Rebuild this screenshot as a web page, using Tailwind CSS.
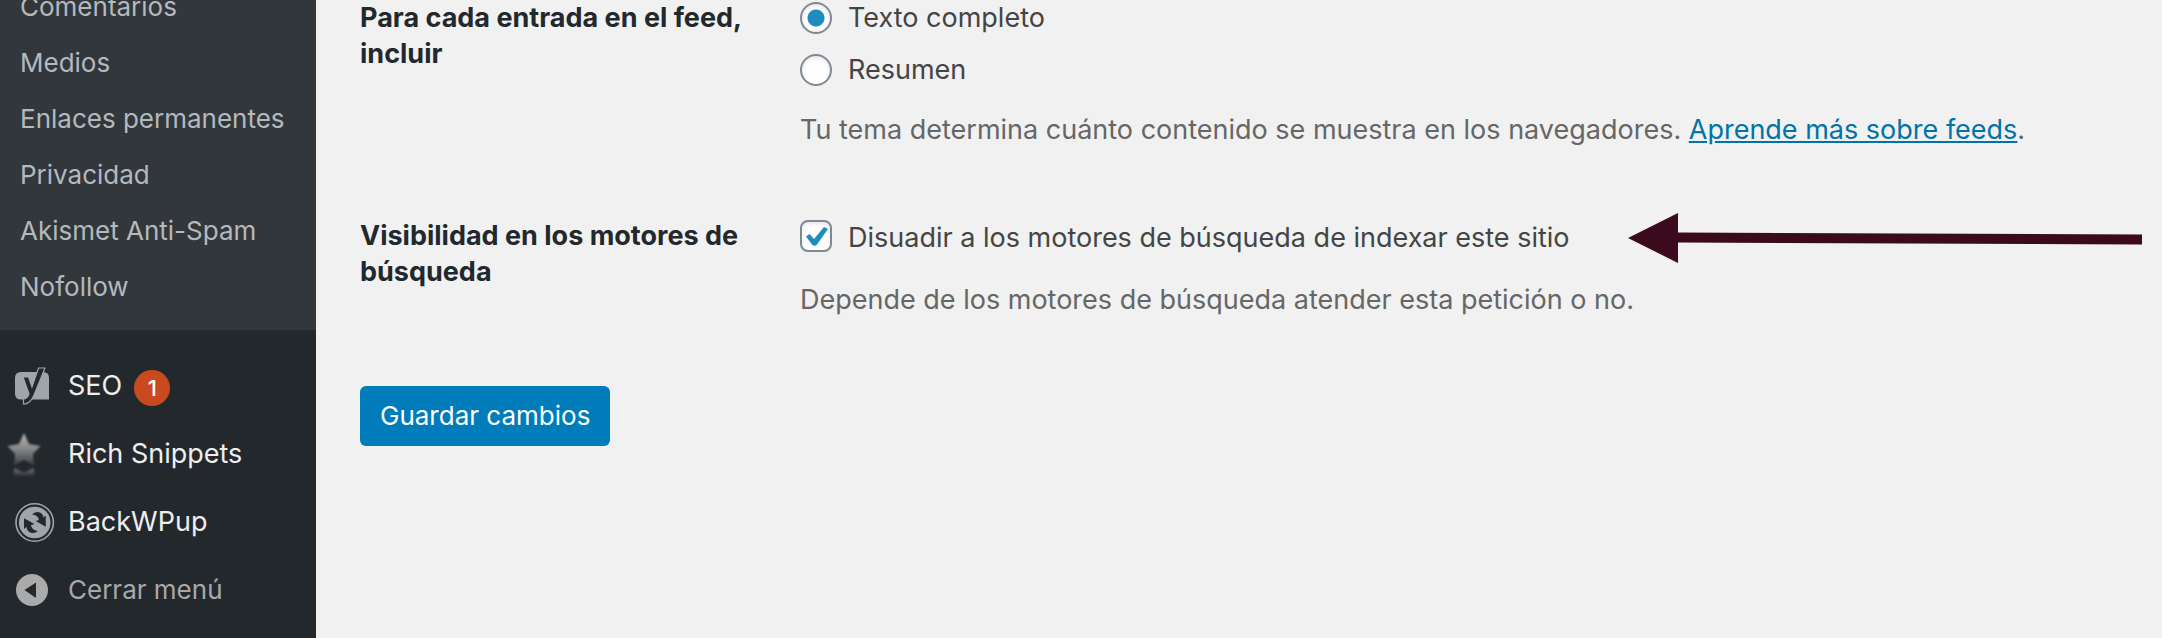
<!DOCTYPE html>
<html lang="es">
<head>
    <meta charset="UTF-8" />
    <meta name="viewport" content="width=device-width, initial-scale=1.0" />
    <title>Ajustes de lectura</title>

    <script src="https://cdn.jsdelivr.net/npm/@tailwindcss/browser@4"></script>
</head>
<body class="bg-[#f1f1f1] font-['Inter',sans-serif] text-[27px] leading-9 text-[#444]">
    <div class="flex h-screen overflow-hidden">

        <nav class="w-[316px] shrink-0 bg-[#23282d]">
            <!-- Settings submenu, scrolled part of the way -->
            <ul class="-mt-[21px] bg-[#32373c] pb-[15px] text-[26px] text-[#b4b9be]">
                <li><a href="#" class="flex h-14 items-center px-5">Comentarios</a></li>
                <li><a href="#" class="flex h-14 items-center px-5">Medios</a></li>
                <li><a href="#" class="flex h-14 items-center px-5">Enlaces permanentes</a></li>
                <li><a href="#" class="flex h-14 items-center px-5">Privacidad</a></li>
                <li><a href="#" class="flex h-14 items-center px-5">Akismet Anti-Spam</a></li>
                <li><a href="#" class="flex h-14 items-center px-5">Nofollow</a></li>
            </ul>

            <ul class="pt-[22px] text-[#eee]">
                <li>
                    <a href="#" class="flex h-[68px] items-center">
                        <svg class="mr-1 h-[68px] w-16 shrink-0" viewBox="0 0 64 68" fill="none" aria-hidden="true">
                            <path d="M21 20H43Q49 20 49 26V47.5H21Q15 47.5 15 41.500V26Q15 20 21 20Z" fill="#a0a5aa" />
                            <path d="M38.500 16H45L34 43Q30 52.500 23.500 52V47Q27 47 29 42L23 25H28.500L32 35Z" fill="#23282d" stroke="#a0a5aa" stroke-width="1.200" />
                        </svg>
                        SEO
                        <span class="ml-3 mt-1 flex size-9 items-center justify-center rounded-full bg-[#ca4a1f] text-[22px] font-medium text-white">1</span>
                    </a>
                </li>
                <li>
                    <a href="#" class="flex h-[68px] items-center">
                        <svg class="mr-1 h-[68px] w-16 shrink-0" viewBox="0 0 64 68" aria-hidden="true">
                            <defs>
                                <linearGradient id="star" x1="0" y1="0" x2="0" y2="1">
                                    <stop offset="0" stop-color="#b5b5b5" />
                                    <stop offset=".5" stop-color="#858585" />
                                    <stop offset="1" stop-color="#3c3f42" />
                                </linearGradient>
                                <linearGradient id="shade" x1="0" y1="0" x2="0" y2="1">
                                    <stop offset="0" stop-color="#777" />
                                    <stop offset="1" stop-color="#23282d" />
                                </linearGradient>
                                <filter id="soft"><feGaussianBlur stdDeviation=".8" /></filter>
                            </defs>
                            <g filter="url(#soft)">
                                <path d="M24 13L29 24L40.500 26L33 34L34 45L24 40L14 45L15 34L7.500 26L19 24Z" fill="url(#star)" />
                                <path d="M14 48L24 52.500L34 48V57H14Z" fill="url(#shade)" />
                            </g>
                        </svg>
                        Rich Snippets
                    </a>
                </li>
                <li>
                    <a href="#" class="flex h-[68px] items-center">
                        <svg class="mr-1 h-[68px] w-16 shrink-0" viewBox="0 0 64 68" fill="none" aria-hidden="true">
                            <circle cx="34.700" cy="34.500" r="18.700" stroke="#a0a5aa" stroke-width="1.600" />
                            <circle cx="34.700" cy="34.500" r="15.800" fill="#a0a5aa" />
                            <path d="M32 26.500Q34 24 37.500 24Q43 24.500 43.500 29.500L45.800 27.500V38.800L35.700 33L38.800 32Q38.500 27 32 26.500Z" fill="#23282d" />
                            <path d="M37.700 43Q35.500 45.500 32 45Q27 44 26.500 39L24 41V30.200L34.500 36L31 37Q31.500 42 37.700 43Z" fill="#23282d" />
                        </svg>
                        BackWPup
                    </a>
                </li>
                <li>
                    <button type="button" class="flex h-[68px] w-full items-center text-[26px] text-[#a9a9a9]">
                        <svg class="mr-1 h-[68px] w-16 shrink-0" viewBox="0 0 64 68" aria-hidden="true">
                            <circle cx="32" cy="34" r="16" fill="#aaa" />
                            <path d="M24.500 34L36 26.500V42Z" fill="#23282d" />
                        </svg>
                        Cerrar menú
                    </button>
                </li>
            </ul>
        </nav>

        <main class="min-w-0 flex-1 pl-11">
            <form>
                <fieldset class="flex">
                    <div class="w-[440px] shrink-0 pr-5 font-bold text-[#23282d]" id="feed-title">Para cada entrada en el feed, incluir</div>
                    <div class="flex-1" role="radiogroup" aria-labelledby="feed-title">
                        <label class="flex items-center gap-4">
                            <input type="radio" name="feed" checked class="size-8 appearance-none rounded-full border-2 border-[#7e8993] bg-white bg-[radial-gradient(circle,#1e8cbe_8px,transparent_9px)] shadow-[inset_0_2px_4px_rgba(0,0,0,0.1)]" />
                            Texto completo
                        </label>
                        <label class="mt-4 flex items-center gap-4">
                            <input type="radio" name="feed" class="size-8 appearance-none rounded-full border-2 border-[#7e8993] bg-white shadow-[inset_0_2px_4px_rgba(0,0,0,0.1)]" />
                            Resumen
                        </label>
                        <p class="mt-6 text-[#666]">Tu tema determina cuánto contenido se muestra en los navegadores. <a href="#" class="text-[#0073aa] underline">Aprende más sobre feeds</a>.</p>
                    </div>
                </fieldset>

                <div class="mt-[70px] flex">
                    <div class="w-[440px] shrink-0 pr-5 font-bold text-[#23282d]">Visibilidad en los motores de búsqueda</div>
                    <div class="flex-1">
                        <div class="flex items-center pr-5">
                            <label class="flex items-start gap-4 leading-10">
                                <span class="mt-0.5 grid">
                                    <input type="checkbox" checked class="col-start-1 row-start-1 size-8 appearance-none rounded-lg border-2 border-[#7e8993] bg-white shadow-[inset_0_2px_4px_rgba(0,0,0,0.1)]" />
                                    <svg class="pointer-events-none col-start-1 row-start-1 size-8" viewBox="0 0 32 32" aria-hidden="true">
                                        <path d="M6 16.500L9.500 14L14 19L24 7L28 9L17 24.500Q14.500 27 12 24.500Z" fill="#1e8cbe" />
                                    </svg>
                                </span>
                                Disuadir a los motores de búsqueda de indexar este sitio
                            </label>
                            <svg class="-my-2 ml-auto h-[50px] w-[514px]" viewBox="0 0 514 50" fill="#3b0a1c" aria-hidden="true">
                                <path d="M0 25L50 0V19.500L514 21.500V31.500L50 29.500V50Z" />
                            </svg>
                        </div>
                        <p class="mt-6 text-[#666]">Depende de los motores de búsqueda atender esta petición o no.</p>
                    </div>
                </div>

                <button type="submit" class="mt-[68px] h-[60px] rounded-md bg-[#007cba] px-5 text-[26px] text-white">Guardar cambios</button>
            </form>
        </main>

    </div>
</body>
</html>
